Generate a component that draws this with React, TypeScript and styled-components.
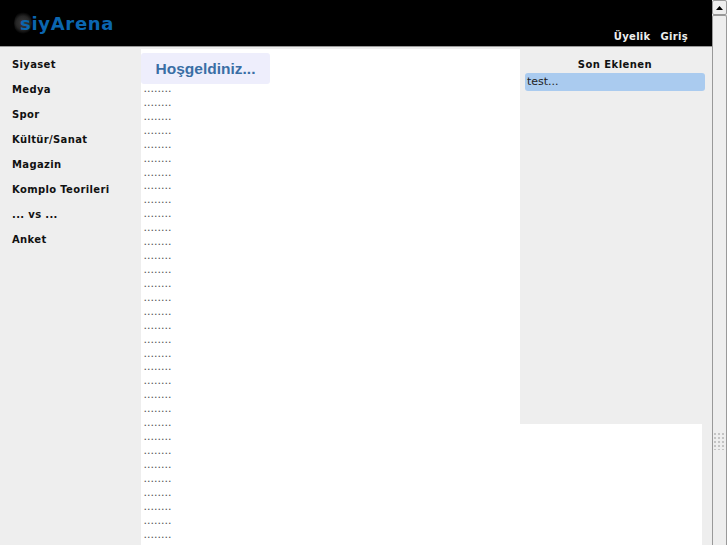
import React from "react";
import styled, { createGlobalStyle } from "styled-components";

const Global = createGlobalStyle`
  html, body { margin: 0; padding: 0; height: 100%; overflow: hidden; background: #eeeeee; }
  body { font-family: "DejaVu Sans", sans-serif; font-size: 11px; color: #000; }
  #root { height: 100%; }
`;

const Viewport = styled.div`
  display: flex;
  width: 727px;
  height: 545px;
  overflow: hidden;
`;
const Page = styled.div`
  width: 712px;
  flex: none;
  display: flex;
  flex-direction: column;
`;
const Header = styled.header`
  height: 46px;
  flex: none;
  background: #000;
  border-bottom: 1px solid #999;
  display: flex;
  justify-content: space-between;
  padding: 0 24px 0 14px;
`;
const Logo = styled.div`
  position: relative;
  display: flex;
  align-items: center;
  height: 46px;
  padding: 2px 0 0 6px;
  box-sizing: border-box;
  font: bold 18px/1 "DejaVu Sans", sans-serif;
  letter-spacing: 0.7px;
  color: #0b66b0;
`;
const LogoGlow = styled.span`
  position: absolute;
  left: 0;
  top: 11px;
  width: 18px;
  height: 24px;
  border-radius: 50%;
  background: radial-gradient(circle, #3c3c3c 0%, #262626 45%, #000 72%);
`;
const LogoText = styled.span`
  position: relative;
`;
const HeaderNav = styled.nav`
  display: flex;
  align-items: flex-end;
  gap: 10px;
  padding-bottom: 2px;
`;
const HeaderLink = styled.a`
  font: bold 10px/14px "DejaVu Sans", sans-serif;
  letter-spacing: 0.3px;
  color: #eee;
`;
const Body = styled.div`
  flex: 1;
  min-height: 0;
  display: flex;
`;
const Sidebar = styled.nav`
  width: 141px;
  flex: none;
  display: flex;
  flex-direction: column;
  padding: 5px 0 0 12px;
  box-sizing: border-box;
`;
const MenuItem = styled.a`
  font: bold 10px/25px "DejaVu Sans", sans-serif;
  letter-spacing: 0.35px;
  color: #111;
`;
const Main = styled.main`
  width: 561px;
  flex: none;
  margin-top: 2px;
  background: #fff;
  display: flex;
  align-items: flex-start;
`;
const Center = styled.div`
  width: 379px;
  flex: none;
  height: 496px;
  overflow: hidden;
`;
const Welcome = styled.h1`
  margin: 4px 0 0;
  width: 129px;
  height: 31px;
  background: #eeeefc;
  border-radius: 3px;
  font: bold 15.5px/31px "Liberation Sans", sans-serif;
  color: #3a6ea5;
  text-align: center;
`;
const Dots = styled.div`
  margin-top: -2px;
  padding: 0 0 0 2.5px;
  font: 11px/13.92px "DejaVu Sans", sans-serif;
  color: #555;
`;
const Aside = styled.aside`
  width: 192px;
  height: 375px;
  flex: none;
  background: #eeeeee;
  padding: 8px 7px 0 5px;
  box-sizing: border-box;
`;
const AsideTitle = styled.h2`
  margin: 0;
  font: bold 10px/16px "DejaVu Sans", sans-serif;
  letter-spacing: 0.45px;
  text-align: center;
  color: #111;
`;
const AsideItem = styled.div`
  height: 18px;
  background: #aacbef;
  border-radius: 3px;
  padding-left: 2px;
  font: 11px/17px "DejaVu Sans", sans-serif;
  color: #222;
`;
const Scrollbar = styled.div`
  width: 15px;
  flex: none;
  box-sizing: border-box;
  display: flex;
  flex-direction: column;
  background: #eeeeee;
`;
const ScrollButton = styled.div`
  height: 15px;
  flex: none;
  box-sizing: border-box;
  border: 1px solid #999;
  border-radius: 2px;
  display: flex;
  align-items: center;
  justify-content: center;
`;
const ScrollThumb = styled.div`
  flex: 1;
  box-sizing: border-box;
  border: 1px solid #999;
  border-bottom: none;
  border-radius: 2px 2px 0 0;
  display: flex;
  justify-content: center;
  padding-top: 417px;
`;
const Grip = styled.div`
  width: 11px;
  height: 17px;
  background-image: radial-gradient(circle at 1px 1px, #c4c4c4 1px, transparent 1.2px);
  background-size: 4px 4px;
`;

const menu = ["Siyaset", "Medya", "Spor", "Kültür/Sanat", "Magazin", "Komplo Teorileri", "... vs ...", "Anket"];

export default function App() {
  return (
    <Viewport>
      <Global />
      <Page>
        <Header>
          <Logo>
            <LogoGlow />
            <LogoText>siyArena</LogoText>
          </Logo>
          <HeaderNav>
            <HeaderLink>Üyelik</HeaderLink>
            <HeaderLink>Giriş</HeaderLink>
          </HeaderNav>
        </Header>
        <Body>
          <Sidebar>
            {menu.map((m) => (
              <MenuItem key={m}>{m}</MenuItem>
            ))}
          </Sidebar>
          <Main>
            <Center>
              <Welcome>Hoşgeldiniz...</Welcome>
              <Dots>
                {Array.from({ length: 33 }, (_, i) => (
                  <div key={i}>........</div>
                ))}
              </Dots>
            </Center>
            <Aside>
              <AsideTitle>Son Eklenen</AsideTitle>
              <AsideItem>test...</AsideItem>
            </Aside>
          </Main>
        </Body>
      </Page>
      <Scrollbar>
        <ScrollButton>
          <svg width="7" height="4" viewBox="0 0 7 4"><path d="M3.5 0L7 4H0z" fill="#000" /></svg>
        </ScrollButton>
        <ScrollThumb>
          <Grip />
        </ScrollThumb>
      </Scrollbar>
    </Viewport>
  );
}
